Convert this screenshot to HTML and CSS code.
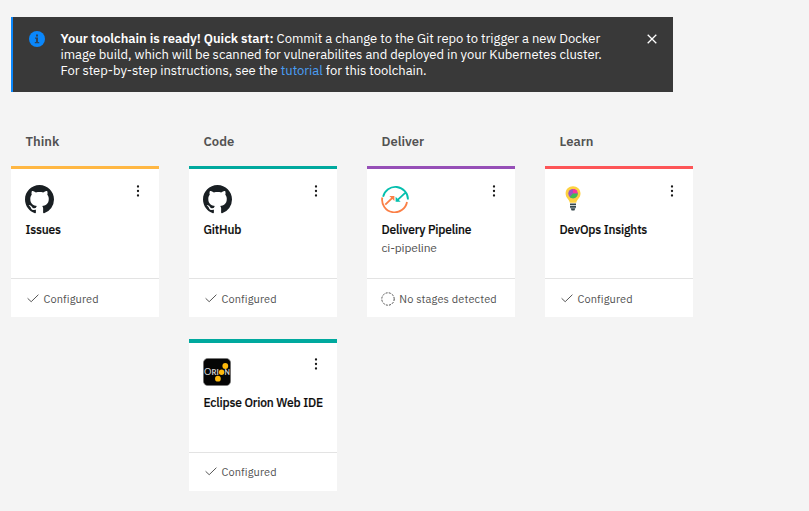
FILE: index.html
```html
<!DOCTYPE html>
<html lang="en">
<head>
<meta charset="utf-8">
<title>Toolchain</title>
<link rel="stylesheet" href="styles.css">
</head>
<body>
<svg class="defs" aria-hidden="true">
  <symbol id="github" viewBox="0 0 16 16"><path fill="#191f23" d="M8 0C3.58 0 0 3.58 0 8c0 3.54 2.29 6.53 5.47 7.59.4.07.55-.17.55-.38 0-.19-.01-.82-.01-1.49-2.01.37-2.53-.49-2.69-.94-.09-.23-.48-.94-.82-1.13-.28-.15-.68-.52-.01-.53.63-.01 1.08.58 1.23.82.72 1.21 1.87.87 2.33.66.07-.52.28-.87.51-1.07-1.78-.2-3.64-.89-3.64-3.95 0-.87.31-1.59.82-2.15-.08-.2-.36-1.02.08-2.12 0 0 .67-.21 2.2.82.64-.18 1.32-.27 2-.27s1.36.09 2 .27c1.53-1.04 2.2-.82 2.2-.82.44 1.1.16 1.92.08 2.12.51.56.82 1.27.82 2.15 0 3.07-1.87 3.75-3.65 3.95.29.25.54.73.54 1.48 0 1.07-.01 1.93-.01 2.2 0 .21.15.46.55.38A8.01 8.01 0 0 0 16 8c0-4.42-3.58-8-8-8z"/></symbol>
  <symbol id="menu" viewBox="0 0 4 12"><g fill="#171717"><circle cx="2" cy="1.5" r="1.15"/><circle cx="2" cy="6" r="1.15"/><circle cx="2" cy="10.5" r="1.15"/></g></symbol>
  <symbol id="check" viewBox="0 0 12 9"><path d="M.6 4.3 4.2 7.7 11.4.7" fill="none" stroke="#565656" stroke-width="1"/></symbol>
</svg>

<section class="notice">
  <svg class="notice-icon" viewBox="0 0 16 16"><circle cx="8" cy="8" r="8" fill="#0a87fb"/><path d="M7 3.4h2v2H7zM6 6.6h3v4.4h1.2v1.2H5.8V11H7V7.8H6z" fill="#2b4560"/></svg>
  <p class="notice-text"><span class="line"><strong>Your toolchain is ready! Quick start:</strong> Commit a change to the Git repo to trigger a new Docker</span>
  <span class="line">image build, which will be scanned for vulnerabilites and deployed in your Kubernetes cluster.</span>
  <span class="line">For step-by-step instructions, see the <a>tutorial</a> for this toolchain.</span></p>
  <svg class="close" viewBox="0 0 10 10"><path d="M.7.7l8.6 8.6M9.3.7L.7 9.3" stroke="#fff" stroke-width="1.3"/></svg>
</section>

<main class="board">
  <section class="column think">
    <h2>Think</h2>
    <article class="card">
      <div class="body">
        <div class="top"><svg class="logo github"><use href="#github"/></svg><svg class="menu"><use href="#menu"/></svg></div>
        <h3>Issues</h3>
      </div>
      <footer><svg class="check"><use href="#check"/></svg><span>Configured</span></footer>
    </article>
  </section>

  <section class="column code">
    <h2>Code</h2>
    <article class="card">
      <div class="body">
        <div class="top"><svg class="logo github"><use href="#github"/></svg><svg class="menu"><use href="#menu"/></svg></div>
        <h3>GitHub</h3>
      </div>
      <footer><svg class="check"><use href="#check"/></svg><span>Configured</span></footer>
    </article>
    <article class="card second">
      <div class="body">
        <div class="top">
          <svg class="logo" viewBox="0 0 28 28"><rect x=".4" y=".4" width="27.2" height="27.2" rx="4.5" fill="#050505" stroke="#777" stroke-width=".7"/><g fill="#d4d4d4" font-family="Lato, sans-serif"><text x=".9" y="17" font-size="10" textLength="7.4" lengthAdjust="spacingAndGlyphs">O</text><text x="8.6" y="17" font-size="7.5" font-weight="700" textLength="7.2" lengthAdjust="spacingAndGlyphs">RI</text><text x="21.6" y="17" font-size="7.5" font-weight="700" textLength="5.4" lengthAdjust="spacingAndGlyphs">N</text></g><g fill="#fdb90b"><circle cx="22.3" cy="8" r="2.9"/><circle cx="18.6" cy="14.3" r="2.7"/><circle cx="14.9" cy="20.7" r="2.9"/></g></svg>
          <svg class="menu"><use href="#menu"/></svg>
        </div>
        <h3>Eclipse Orion Web IDE</h3>
      </div>
      <footer><svg class="check"><use href="#check"/></svg><span>Configured</span></footer>
    </article>
  </section>

  <section class="column deliver">
    <h2>Deliver</h2>
    <article class="card">
      <div class="body">
        <div class="top">
          <svg class="logo" viewBox="0 0 28 28" fill="none" stroke-width="1.8"><g stroke="#05bfae"><path d="M2.1 11.8A12.6 12.6 0 0 1 27 14.6M24.2 7.8 15.6 15.8"/><path fill="#05bfae" stroke="none" d="M14.6 16.8v-5l5 5z"/></g><g stroke="#fb7f46"><path d="M1.3 12.5A12.5 12.5 0 0 0 26 17M4.3 19.7 12.4 11.9"/><path fill="#fb7f46" stroke="none" d="M13.4 10.9v5l-5-5z"/></g></svg>
          <svg class="menu"><use href="#menu"/></svg>
        </div>
        <h3>Delivery Pipeline</h3>
        <p class="sub">ci-pipeline</p>
      </div>
      <footer><svg class="pending" viewBox="0 0 14 14"><circle cx="7" cy="7" r="6.2" fill="none" stroke="#484848" stroke-width="1" stroke-dasharray="2 1.25"/></svg><span>No stages detected</span></footer>
    </article>
  </section>

  <section class="column learn">
    <h2>Learn</h2>
    <article class="card">
      <div class="body">
        <div class="top">
          <svg class="logo bulb" viewBox="0 0 28 28"><path d="M14 1.3c-4.2 0-7.4 3.1-7.4 7.2 0 4.8 3.8 5.6 4.2 9.3h6.5c.4-3.7 4.2-4.5 4.2-9.3 0-4.1-3.3-7.2-7.5-7.2z" fill="#fed141"/><circle cx="14" cy="8.6" r="4.7" fill="#9856c2"/><path d="M14 8.6V3.9a4.7 4.7 0 0 1 4.6 4.7z" fill="#fb329d"/><path d="M14 8.6h4.7a4.7 4.7 0 0 1-8 3.3z" fill="#3fbd53"/><path d="M11 18.6h6v1.7h-6zM11 20.9h6v1.8h-6zM11.6 23.2h4.8l-1 2.4h-2.8z" fill="#36474d"/></svg>
          <svg class="menu"><use href="#menu"/></svg>
        </div>
        <h3>DevOps Insights</h3>
      </div>
      <footer><svg class="check"><use href="#check"/></svg><span>Configured</span></footer>
    </article>
  </section>
</main>
</body>
</html>
```
FILE: styles.css
```css
* { box-sizing: border-box; margin: 0; padding: 0; }
body {
  background: #f4f4f4;
  color: #0c0c0c;
  font: 13px/16px "IBM Plex Sans", Roboto, sans-serif;
  padding: 17px 11px 0;
  overflow: hidden;
}
svg { display: block; flex: none; }
.defs { display: none; }

.notice {
  display: flex;
  align-items: flex-start;
  width: 662px;
  height: 75px;
  padding: 14px 21px 0 16px;
  border-left: 2px solid #0a87fb;
  background: #393939;
  color: #fff;
}
.notice-icon { width: 16px; height: 16px; }
.notice-text { flex: 1; margin-left: 15.5px; letter-spacing: -.035px; }
.notice strong { font-weight: 600; letter-spacing: -.035px; }
.line { display: block; white-space: nowrap; }
.notice a { color: #4a9ff5; }
.close { width: 10px; height: 10px; margin-top: 3px; margin-right: -5px; }

.board {
  display: grid;
  grid-template-columns: repeat(4, 148px);
  column-gap: 30px;
  margin-top: 41px;
}
.column h2 {
  height: 33px;
  padding-left: 14.5px;
  color: #525252;
  font-size: 13px;
  font-weight: 600;
  line-height: 17px;
}
.card {
  display: flex;
  flex-direction: column;
  height: 151px;
  border-top: 3px solid;
  background: #fff;
}
.card.second { height: 152px; margin-top: 22px; border-top-width: 4px; }
.think .card { border-color: #ffb743; }
.code .card { border-color: #00a99e; }
.deliver .card { border-color: #964fb7; }
.learn .card { border-color: #fd5557; }
.body { flex: 1; padding: 15px 14px 0; }
.top { display: flex; justify-content: space-between; height: 30px; padding-top: 1px; }
.second .top { height: 29px; padding-top: 0; }
.logo { width: 28px; height: 28px; margin-left: .4px; }
.logo.github { width: 29px; height: 29px; margin-left: 0; }
.logo.bulb { margin-left: .4px; }
.menu { width: 4px; height: 12px; margin: 0 5px 0 0; }
.card h3 {
  margin-top: 8px;
  padding-left: .5px;
  font-size: 12px;
  font-weight: 500;
  line-height: 16px;
  letter-spacing: -.16px;
  white-space: nowrap;
  -webkit-text-stroke: .15px #0c0c0c;
}
.sub { margin-top: 2px; padding-left: .4px; color: #525252; font-size: 12px; letter-spacing: -.15px; }
.card footer {
  display: flex;
  align-items: center;
  height: 39px;
  padding: 1px 0 0 15.5px;
  border-top: 1px solid #e3e3e3;
  color: #525252;
  font-size: 11px;
  letter-spacing: .12px;
  white-space: nowrap;
}
.second footer { padding-top: 0; padding-bottom: 1px; }
.check { width: 12px; height: 9px; margin-right: 5px; }
.pending { width: 14px; height: 14px; margin: 0 4px 0 -1.2px; }
```
